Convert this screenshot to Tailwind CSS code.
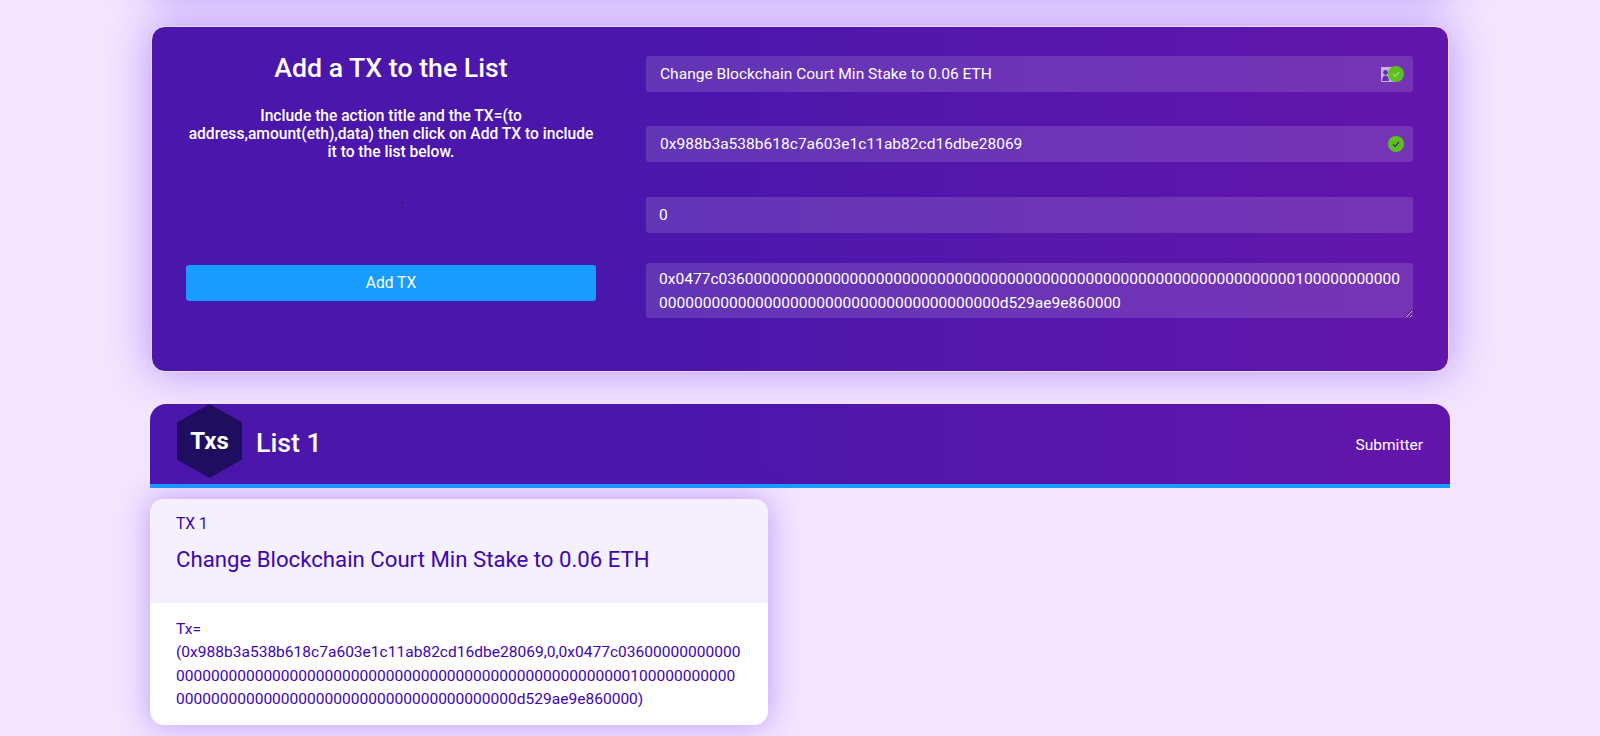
<!DOCTYPE html>
<html lang="en">
<head>
  <meta charset="UTF-8" />
  <title>Add a TX</title>
  <script src="https://cdn.jsdelivr.net/npm/@tailwindcss/browser@4"></script>
</head>
<body class="bg-[#f3e4ff] h-[736px] overflow-hidden font-['Roboto',sans-serif] text-white">
  <div class="w-[1300px] ml-[150px]">
    <!-- previous card, only its shadow shows above the fold -->
    <div class="h-[40px] -mt-[50px] mb-[36px] rounded-[14px] bg-[#4b16ab] shadow-[0_0_40px_rgba(100,40,245,0.5)]"></div>

    <!-- Add a TX form -->
    <section class="ml-[1px] w-[1298px] h-[346px] rounded-[14px] border border-[#e4d9f7] bg-gradient-to-r from-[#4b16ab] from-40% to-[#6315ab] shadow-[0_0_40px_rgba(100,40,245,0.42)] grid grid-cols-[410px_767px] gap-x-[50px] pl-[34px] pt-[29px]">
      <div class="flex flex-col items-center">
        <h2 class="text-[26.7px] leading-[24px] font-medium">Add a TX to the List</h2>
        <p class="mt-[27px] w-[410px] text-center text-[15.6px] leading-[18px] font-medium">Include the action title and the TX=(to address,amount(eth),data) then click on Add TX to include it to the list below.</p>
        <div class="w-[1px] h-[1px] bg-black mt-[41px] ml-[23px]"></div>
        <button type="button" class="mt-[62px] w-[410px] h-[36px] pt-[2px] rounded-[3px] bg-[#199cff] text-[15.6px]">Add TX</button>
      </div>

      <div class="flex flex-col">
        <div class="h-[36px] rounded-[3px] bg-white/13 flex items-center justify-between pl-[14px] pr-[9px] text-[15.55px]">
          <span class="pt-[2px]">Change Blockchain Court Min Stake to 0.06 ETH</span>
          <span class="relative w-[23px] h-[16px] block">
            <svg class="absolute left-0 top-[1px]" width="16" height="15" viewBox="0 0 16 15">
              <rect width="16" height="15" rx="1" fill="#c4b4dc" />
              <circle cx="4.500" cy="5.500" r="2.400" fill="#6a2bb0" />
              <path d="M1 14c0-3.500 1.400-5.500 3.500-5.500S8 10.500 8 14z" fill="#6a2bb0" />
            </svg>
            <svg class="absolute right-0 top-0" width="16" height="16" viewBox="0 0 16 16">
              <circle cx="8" cy="8" r="8" fill="#5cc11f" />
              <path d="M5 8.300l2.200 2.100L11 6" fill="none" stroke="#a8d98a" stroke-width="1.200" />
            </svg>
          </span>
        </div>
        <div class="mt-[34px] h-[36px] rounded-[3px] bg-white/13 flex items-center justify-between pl-[14px] pr-[9px] text-[15.55px]">
          <span class="pt-[2px]">0x988b3a538b618c7a603e1c11ab82cd16dbe28069</span>
          <svg width="16" height="16" viewBox="0 0 16 16">
            <circle cx="8" cy="8" r="8" fill="#5cc11f" />
            <path d="M5 8.300l2.200 2.100L11 6" fill="none" stroke="#47208f" stroke-width="1.200" />
          </svg>
        </div>
        <div class="mt-[35px] h-[36px] pt-[2px] rounded-[3px] bg-white/13 flex items-center pl-[13px] pr-[10px] text-[15.55px]">0</div>
        <textarea class="mt-[30px] h-[55px] w-full rounded-[3px] bg-white/13 pl-[13px] pr-[10px] pt-[4px] text-[15.55px] leading-[24px] outline-none overflow-hidden">0x0477c036000000000000000000000000000000000000000000000000000000000000000100000000000000000000000000000000000000000000000000d529ae9e860000</textarea>
      </div>
    </section>

    <!-- List header -->
    <header class="mt-[32px] h-[84px] rounded-t-[16px] border-b-4 border-[#199cff] bg-gradient-to-r from-[#4b16ab] from-40% to-[#6315ab] flex justify-between pl-[27px] pr-[27px]">
      <div class="flex items-start gap-[14px]">
        <div class="w-[65px] h-[74px] bg-[#1f0d5f] [clip-path:polygon(50%_0,100%_25%,100%_75%,50%_100%,0_75%,0_25%)] flex items-center justify-center text-[24px] font-bold">Txs</div>
        <h3 class="text-[26.7px] leading-[78px] font-medium">List 1</h3>
      </div>
      <span class="text-[15.5px] leading-[82px]">Submitter</span>
    </header>

    <!-- TX card -->
    <article class="mt-[11px] w-[618px] h-[226px] rounded-[14px] overflow-hidden bg-white text-[#4004b0] shadow-[0_0_30px_rgba(100,40,245,0.38)]">
      <div class="h-[104px] bg-[#f4f0fd] pl-[26px] pt-[15px]">
        <p class="text-[15.6px] leading-[20px]">TX 1</p>
        <h4 class="mt-[10px] text-[22.2px] leading-[30px]">Change Blockchain Court Min Stake to 0.06 ETH</h4>
      </div>
      <p class="pl-[26px] pr-[26px] pt-[15px] text-[15.55px] leading-[23.3px] break-words">Tx= (0x988b3a538b618c7a603e1c11ab82cd16dbe28069,0,0x0477c036000000000000000000000000000000000000000000000000000000000000000100000000000000000000000000000000000000000000000000d529ae9e860000)</p>
    </article>
  </div>
</body>
</html>
